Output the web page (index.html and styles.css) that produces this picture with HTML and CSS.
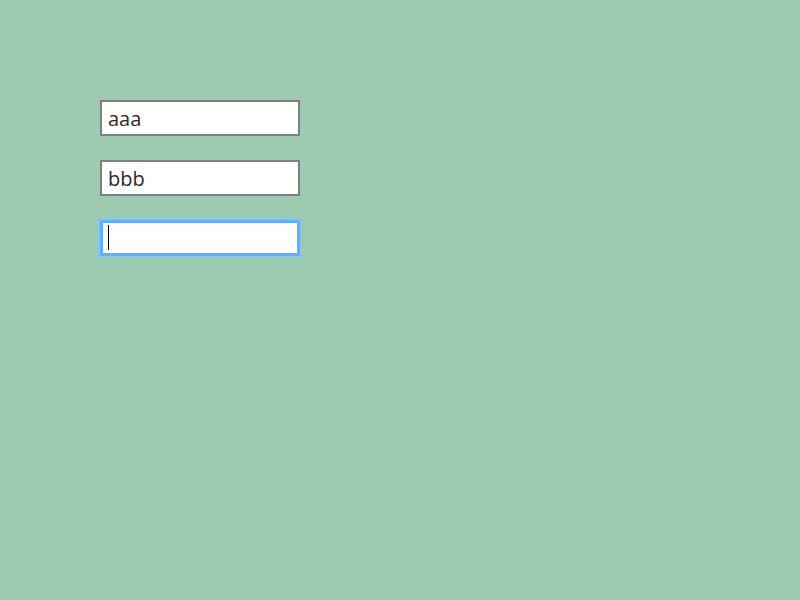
FILE: index.html
```html
<!DOCTYPE html>
<html>
<head>
<meta charset="utf-8">
<link rel="stylesheet" href="styles.css">
</head>
<body>
<div class="form">
  <input class="field" type="text" value="aaa">
  <input class="field" type="text" value="bbb">
  <div class="field-wrap">
    <input class="field" type="text" value="" autofocus>
    <span class="caret" aria-hidden="true"></span>
  </div>
</div>
</body>
</html>
```
FILE: styles.css
```css
html, body {
  margin: 0;
  height: 100%;
  background: #9ccbb2;
}
.form {
  display: flex;
  flex-direction: column;
  align-items: flex-start;
  gap: 24px;
  padding: 100px;
}
.field-wrap {
  position: relative;
  display: flex;
}
.field {
  box-sizing: border-box;
  width: 200px;
  height: 36px;
  margin: 0;
  padding: 0 6px;
  border: 2px solid #808080;
  border-radius: 0;
  background: #ffffff;
  font-family: "Open Sans", "Noto Sans", sans-serif;
  font-size: 20px;
  color: #2a2a2a;
  caret-color: transparent;
  outline: none;
}
.field:focus {
  border-color: #5fb0f7;
  box-shadow: 0 0 0 2px #8cc4f0, inset 0 0 0 1px #5fb0f7;
}
.caret {
  position: absolute;
  left: 8px;
  top: 5px;
  width: 1px;
  height: 25px;
  background: #000000;
}
```
